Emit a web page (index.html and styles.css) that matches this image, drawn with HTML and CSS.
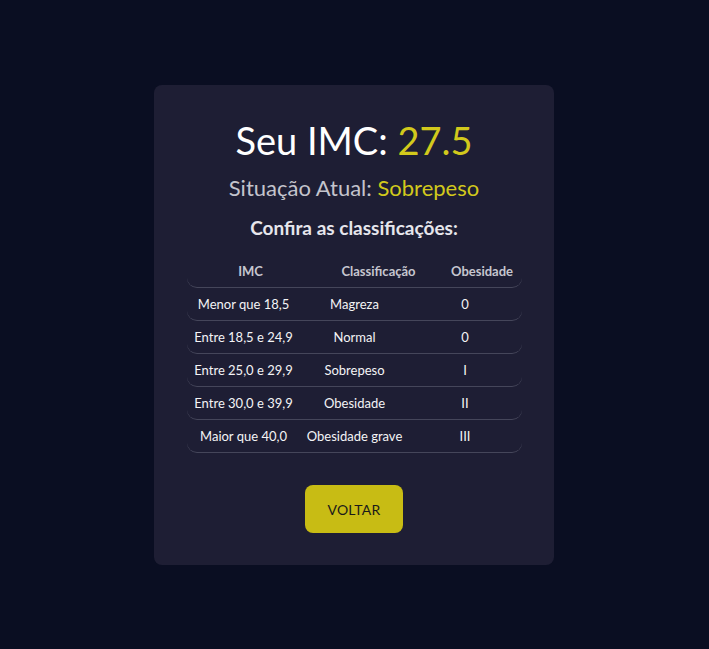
FILE: index.html
```html
<!DOCTYPE html>
<html lang="pt-BR">
<head>
<meta charset="utf-8">
<title>IMC</title>
<link rel="stylesheet" href="styles.css">
</head>
<body>
<main class="page">
  <section class="card">
    <h1 class="title">Seu IMC: <span class="hl">27.5</span></h1>
    <h2 class="status">Situação Atual: <span class="hl">Sobrepeso</span></h2>
    <h3 class="subtitle">Confira as classificações:</h3>
    <div class="table">
      <div class="row head">
        <div>IMC</div><div>Classificação</div><div>Obesidade</div>
      </div>
      <div class="row body">
        <div>Menor que 18,5</div><div>Magreza</div><div>0</div>
      </div>
      <div class="row body">
        <div>Entre 18,5 e 24,9</div><div>Normal</div><div>0</div>
      </div>
      <div class="row body">
        <div>Entre 25,0 e 29,9</div><div>Sobrepeso</div><div>I</div>
      </div>
      <div class="row body">
        <div>Entre 30,0 e 39,9</div><div>Obesidade</div><div>II</div>
      </div>
      <div class="row body">
        <div>Maior que 40,0</div><div>Obesidade grave</div><div>III</div>
      </div>
    </div>
    <button class="btn" type="button">VOLTAR</button>
  </section>
</main>
</body>
</html>
```
FILE: styles.css
```css
* { box-sizing: border-box; }
html, body {
  margin: 0;
  padding: 0;
  background: #0a0e22;
  font-family: Lato, "Liberation Sans", sans-serif;
}
.page {
  display: flex;
  justify-content: center;
  align-items: flex-start;
  padding-top: 85px;
  padding-right: 1px;
  min-height: 649px;
}
.card {
  width: 400px;
  background: #1e1e34;
  border-radius: 8px;
  padding: 32px 32px 32px;
  display: flex;
  flex-direction: column;
  align-items: center;
}
.title {
  margin: 0;
  font-size: 38px;
  font-weight: 400;
  line-height: 46px;
  color: #ffffff;
}
.hl { color: #d2c91c; }
.status {
  margin: 12px 0 0;
  font-size: 22px;
  font-weight: 400;
  line-height: 26px;
  color: #c4c4cc;
}
.subtitle {
  margin: 15px 0 0;
  font-size: 19px;
  font-weight: 700;
  line-height: 23px;
  color: #e6e6ec;
}
.table {
  margin-top: 16px;
  width: 335px;
  display: flex;
  flex-direction: column;
}
.row {
  display: grid;
  height: 33px;
  align-items: center;
  text-align: center;
  border-bottom: 1px solid #45465a;
  border-radius: 10px;
  font-size: 13px;
}
.row.head {
  grid-template-columns: 128px 128px 1fr;
  font-weight: 700;
  color: #c6c6cf;
}
.row.body {
  grid-template-columns: 114px 108px 1fr;
  color: #f4f4f6;
}
.btn {
  margin-top: 32px;
  width: 98px;
  height: 48px;
  border: none;
  border-radius: 8px;
  background: #c8bc14;
  color: #1a1a1a;
  font-family: Lato, "Liberation Sans", sans-serif;
  font-size: 14px;
  letter-spacing: 0.2px;
}
```
